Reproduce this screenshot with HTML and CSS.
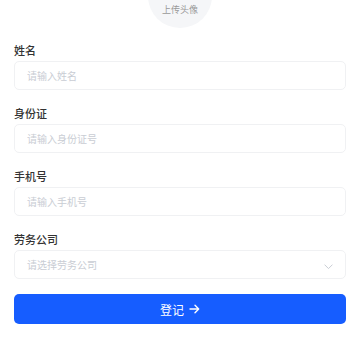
FILE: index.html
```html
<!DOCTYPE html>
<html lang="zh-CN">
<head>
  <meta charset="UTF-8">
  <meta name="viewport" content="width=device-width, initial-scale=1.0">
  <title>登记</title>
  <link rel="stylesheet" href="styles.css">
</head>
<body>
  <div class="container">
    <div class="avatar">
      <span class="avatar-text">上传头像</span>
    </div>

    <div class="input-group">
      <label for="name">姓名</label>
      <input id="name" type="text" placeholder="请输入姓名">
    </div>
    <div class="input-group">
      <label for="idcard">身份证</label>
      <input id="idcard" type="text" placeholder="请输入身份证号">
    </div>
    <div class="input-group">
      <label for="phone">手机号</label>
      <input id="phone" type="text" placeholder="请输入手机号">
    </div>
    <div class="input-group">
      <label>劳务公司</label>
      <div class="select">
        <span class="select-placeholder">请选择劳务公司</span>
        <svg class="chevron" width="9" height="6" viewBox="0 0 9 6" fill="none">
          <path d="M0.8 0.9 L4.5 4.6 L8.2 0.9" stroke="#c9cdd4" stroke-width="1" stroke-linecap="round" stroke-linejoin="round"/>
        </svg>
      </div>
    </div>

    <button class="submit">
      <span>登记</span>
      <svg width="11" height="10" viewBox="0 0 11 10" fill="none">
        <path d="M1 5 H9.5 M6 1.3 L9.7 5 L6 8.7" stroke="#fff" stroke-width="1.4" stroke-linecap="round" stroke-linejoin="round"/>
      </svg>
    </button>
  </div>
</body>
</html>
```

FILE: styles.css
```css
:root {
  --text-color: #333;
  --placeholder: #c9cdd4;
  --border-color: #f0f1f3;
  --primary: #165dff;
}
body {
  margin: 0;
  padding: 0;
  background: #fff;
  font-family: "Noto Sans CJK SC", "Noto Sans", sans-serif;
  color: var(--text-color);
}
.container {
  padding: 0 14px;
}
.avatar {
  width: 64px;
  height: 64px;
  margin: -36px auto 14px;
  border-radius: 50%;
  background: #f5f6f8;
  display: flex;
  justify-content: center;
  align-items: flex-end;
  padding-bottom: 11px;
  box-sizing: border-box;
}
.avatar-text {
  font-size: 9px;
  line-height: 14px;
  color: #999;
}
.input-group {
  margin-bottom: 15px;
}
.input-group label {
  display: block;
  font-size: 11px;
  line-height: 16px;
  font-weight: 500;
  margin-bottom: 3px;
}
input, .select {
  width: 100%;
  height: 29px;
  padding: 0 12px;
  border: 1px solid var(--border-color);
  border-radius: 5px;
  font-family: inherit;
  font-size: 10px;
  color: var(--text-color);
  box-sizing: border-box;
  outline: none;
  background: #fff;
}
input::placeholder {
  color: var(--placeholder);
}
.select {
  display: flex;
  align-items: center;
  justify-content: space-between;
}
.select-placeholder {
  color: var(--placeholder);
}
.chevron {
  margin-top: 4px;
  margin-right: 0;
}
.submit {
  width: 100%;
  height: 30px;
  border: none;
  border-radius: 5px;
  background: var(--primary);
  color: #fff;
  font-family: inherit;
  font-size: 12px;
  display: flex;
  align-items: center;
  justify-content: center;
  gap: 5px;
  cursor: pointer;
}
```
